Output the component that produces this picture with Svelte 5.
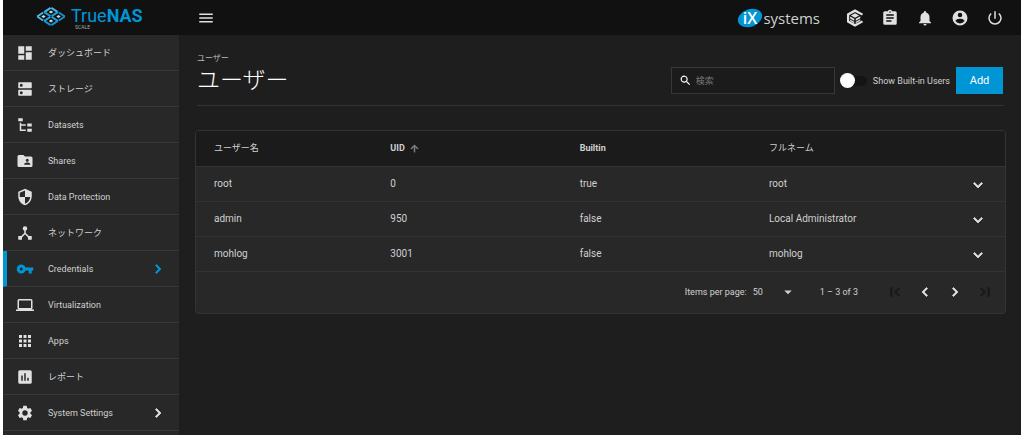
<script lang="ts">
    const menu = [
        { label: 'ダッシュボード', lang: 'ja', icon: 'M13 3v6h8V3m-8 18h8V11h-8M3 21h8v-6H3m0-2h8V3H3v10z' },
        { label: 'ストレージ', lang: 'ja', icon: 'M4 3h16a1 1 0 0 1 1 1v6a1 1 0 0 1-1 1H4a1 1 0 0 1-1-1V4a1 1 0 0 1 1-1zm3 2a2 2 0 1 0 0 4 2 2 0 0 0 0-4zM4 13h16a1 1 0 0 1 1 1v6a1 1 0 0 1-1 1H4a1 1 0 0 1-1-1v-6a1 1 0 0 1 1-1zm3 2a2 2 0 1 0 0 4 2 2 0 0 0 0-4z' },
        { label: 'Datasets', lang: 'en', icon: 'M3 3h6v4H3V3m12 7h6v4h-6v-4m0 7h6v4h-6v-4m-2-4H7v5h6v2H5V9h2v2h6v2z' },
        { label: 'Shares', lang: 'en', icon: 'M20 6h-8l-2-2H4a2 2 0 0 0-2 2v12a2 2 0 0 0 2 2h16a2 2 0 0 0 2-2V8a2 2 0 0 0-2-2zm-5 3a2 2 0 1 1 0 4 2 2 0 0 1 0-4zm4 8h-8v-1c0-1.330 2.670-2 4-2s4 .670 4 2v1z' },
        { label: 'Data Protection', lang: 'en', icon: 'M12 1 3 5v6c0 5.550 3.840 10.740 9 12 5.160-1.260 9-6.450 9-12V5l-9-4zm0 10.990h7c-.530 4.120-3.280 7.790-7 8.940V12H5V6.300l7-3.110v8.800z' },
        { label: 'ネットワーク', lang: 'ja', icon: 'm17 16-4-4V8.820C14.160 8.400 15 7.300 15 6a3 3 0 1 0-6 0c0 1.300.840 2.400 2 2.820V12l-4 4H3v5h5v-3.050l4-4.200 4 4.200V21h5v-5h-4z' },
        { label: 'Credentials', lang: 'en', active: true, arrow: true, icon: 'M12.650 10A5.990 5.990 0 0 0 7 6a6 6 0 1 0 0 12 5.990 5.990 0 0 0 5.650-4H17v4h4v-4h2v-4H12.650zM7 14a2 2 0 1 1 0-4 2 2 0 0 1 0 4z' },
        { label: 'Virtualization', lang: 'en', icon: 'M20 18a2 2 0 0 0 2-2V6a2 2 0 0 0-2-2H4a2 2 0 0 0-2 2v10a2 2 0 0 0 2 2H0v2h24v-2h-4zM4 6h16v10H4V6z' },
        { label: 'Apps', lang: 'en', icon: 'M4 8h4V4H4v4zm6 12h4v-4h-4v4zm-6 0h4v-4H4v4zm0-6h4v-4H4v4zm6 0h4v-4h-4v4zm6-10v4h4V4h-4zm-6 4h4V4h-4v4zm6 6h4v-4h-4v4zm0 6h4v-4h-4v4z' },
        { label: 'レポート', lang: 'ja', icon: 'M19 3H5a2 2 0 0 0-2 2v14a2 2 0 0 0 2 2h14a2 2 0 0 0 2-2V5a2 2 0 0 0-2-2zM9 17H7v-7h2v7zm4 0h-2V7h2v10zm4 0h-2v-4h2v4z' },
        { label: 'System Settings', lang: 'en', arrow: true, icon: 'M19.140 12.940c.040-.300.060-.610.060-.940 0-.320-.020-.640-.070-.940l2.030-1.580a.490.490 0 0 0 .120-.610l-1.920-3.320a.488.488 0 0 0-.590-.220l-2.390.960c-.500-.380-1.030-.700-1.620-.940l-.360-2.540a.484.484 0 0 0-.480-.410h-3.840c-.240 0-.430.170-.470.410l-.360 2.540c-.590.240-1.130.570-1.620.940l-2.390-.960c-.220-.080-.470 0-.590.220L2.740 8.870c-.120.210-.080.470.120.610l2.030 1.580c-.050.300-.090.630-.090.940s.020.640.070.940l-2.030 1.580a.490.490 0 0 0-.120.610l1.920 3.320c.120.220.370.290.590.220l2.390-.960c.500.380 1.030.700 1.620.940l.360 2.540c.050.240.240.410.480.410h3.840c.240 0 .440-.170.470-.410l.360-2.540c.590-.240 1.130-.560 1.620-.940l2.390.960c.220.080.470 0 .590-.220l1.920-3.320c.120-.220.070-.470-.120-.610l-2.010-1.580zM12 15.600a3.600 3.600 0 1 1 0-7.200 3.600 3.600 0 0 1 0 7.200z' },
    ];

    const actions = [
        { label: 'Tasks', icon: 'M19 3h-4.180a3 3 0 0 0-5.640 0H5a2 2 0 0 0-2 2v14a2 2 0 0 0 2 2h14a2 2 0 0 0 2-2V5a2 2 0 0 0-2-2zm-7 0a1 1 0 1 1 0 2 1 1 0 0 1 0-2zm2 14H7v-2h7v2zm3-4H7v-2h10v2zm0-4H7V7h10v2z' },
        { label: 'Alerts', icon: 'M12 22a2 2 0 0 0 2-2h-4a2 2 0 0 0 2 2zm6-6v-5c0-3.070-1.640-5.640-4.500-6.320V4a1.500 1.500 0 0 0-3 0v.680C7.630 5.360 6 7.920 6 11v5l-2 2v1h16v-1l-2-2z' },
        { label: 'Account', icon: 'M12 2a10 10 0 1 0 0 20 10 10 0 0 0 0-20zm0 3a3 3 0 1 1 0 6 3 3 0 0 1 0-6zm0 14.200a7.200 7.200 0 0 1-6-3.220c.030-1.990 4-3.080 6-3.080s5.970 1.090 6 3.080a7.200 7.200 0 0 1-6 3.220z' },
        { label: 'Power', icon: 'M13 3h-2v10h2V3zm4.830 2.170-1.420 1.420A7 7 0 1 1 7.580 6.580L6.170 5.170a9 9 0 1 0 11.660 0z' },
    ];

    const users = [
        { username: 'root', uid: 0, builtin: true, fullName: 'root' },
        { username: 'admin', uid: 950, builtin: false, fullName: 'Local Administrator' },
        { username: 'mohlog', uid: 3001, builtin: false, fullName: 'mohlog' },
    ];

    const pager = [
        { label: 'First page', disabled: true, icon: 'M18.410 16.590 13.820 12l4.590-4.590L17 6l-6 6 6 6zM6 6h2v12H6z' },
        { label: 'Previous page', disabled: false, icon: 'M15.410 7.410 14 6l-6 6 6 6 1.410-1.410L10.830 12z' },
        { label: 'Next page', disabled: false, icon: 'M10 6 8.590 7.410 13.170 12l-4.580 4.590L10 18l6-6z' },
        { label: 'Last page', disabled: true, icon: 'M5.590 7.410 10.180 12l-4.590 4.590L7 18l6-6-6-6zM16 6h2v12h-2z' },
    ];

    let search = $state('');
    let showBuiltin = $state(false);

    const visible = $derived(users.filter((u) => u.username.includes(search)));
</script>

{#snippet icon(path: string)}
    <svg class="icon" viewBox="0 0 24 24" aria-hidden="true"><path d={path} fill-rule="evenodd" /></svg>
{/snippet}

<div class="app">
    <header class="topbar">
        <a class="brand" href="#home">
            <svg class="brand-mark" viewBox="0 0 30 20" aria-hidden="true">
                <g fill="none" stroke-width="2">
                    <path stroke="#45b8e6" d="M8.200 5.600 14.600 1.300M15.400 1.300 21.800 5.600M1.200 10 7.200 6M1.200 10l6 4" />
                    <path stroke="#1492cc" d="M22.800 6l6 4M28.800 10l-6 4M8.200 14.400l6.400 4.300M15.400 18.700l6.400-4.300" />
                    <path stroke="#1c9fd8" d="M8.200 5.600 14.400 9.600M15.600 10.400l6.200 4M21.800 5.600l-6.200 4M14.400 10.400l-6.200 4" />
                </g>
                <g fill="#d5d8da">
                    <path d="m15 4 2.200 1.500L15 7l-2.200-1.500zM7.500 8.500 9.700 10l-2.200 1.500L5.300 10zM22.500 8.500l2.200 1.500-2.200 1.500-2.200-1.500zM15 13l2.200 1.500L15 16l-2.200-1.500z" />
                </g>
            </svg>
            <span class="brand-text">
                <span class="brand-name">True<b>NAS</b></span>
                <span class="brand-edition">SCALE</span>
            </span>
        </a>
        <button class="icon-button" aria-label="Toggle menu">
            {@render icon('M3 18h18v-2H3v2zm0-5h18v-2H3v2zm0-7v2h18V6H3z')}
        </button>
        <div class="actions">
            <a class="ix" href="#ix">
                <svg class="ix-badge" viewBox="0 0 26 20" aria-hidden="true">
                    <ellipse cx="13" cy="10" rx="12.500" ry="8.800" transform="rotate(-20 13 10)" fill="#0095d5" />
                    <text x="13" y="16" text-anchor="middle">iX</text>
                </svg>
                <span class="ix-name">systems</span>
            </a>
            <button class="icon-button" aria-label="TrueCommand">
                <svg class="icon" viewBox="0 0 24 24" aria-hidden="true">
                    <path d="M22 7.500 12 2.200 2.800 7.200v9.600L12 21.800l10-5.300" fill="none" stroke="currentColor" stroke-width="3" />
                    <path d="M12 5.500 17.500 8.500 12 11.500 6.500 8.500zM5.500 10l5.500 3v2.500l-5.500-3zM5.500 14l5.500 3v2l-5.500-3zM13 13l6-3.300v2.500l-6 3.300zM13 17l6-3.300v2L13 19z" />
                </svg>
            </button>
            {#each actions as action}
                <button class="icon-button" aria-label={action.label}>{@render icon(action.icon)}</button>
            {/each}
        </div>
    </header>

    <div class="body">
        <nav class="sidebar">
            {#each menu as item}
                <a class="menu-item" class:active={item.active} href="#menu">
                    {@render icon(item.icon)}
                    <span class="menu-label" lang={item.lang}>{item.label}</span>
                    {#if item.arrow}
                        <span class="chevron">{@render icon('M10 6 8.590 7.410 13.170 12l-4.580 4.590L10 18l6-6z')}</span>
                    {/if}
                </a>
            {/each}
        </nav>

        <main>
            <div class="page-header">
                <div class="titles" lang="ja">
                    <a class="breadcrumb" href="#users">ユーザー</a>
                    <h1>ユーザー</h1>
                </div>
                <div class="tools">
                    <label class="search">
                        {@render icon('M15.500 14h-.790l-.280-.270A6.500 6.500 0 1 0 13.730 14.430l.270.280v.790l5 4.990L20.490 19l-4.990-5zm-6 0a4.500 4.500 0 1 1 0-9 4.500 4.500 0 0 1 0 9z')}
                        <input type="text" lang="ja" placeholder="検索" aria-label="検索" bind:value={search} />
                    </label>
                    <label class="toggle">
                        <input type="checkbox" bind:checked={showBuiltin} />
                        <span>Show Built-in Users</span>
                    </label>
                    <button class="add">Add</button>
                </div>
            </div>

            <section class="card">
                <table>
                    <colgroup>
                        <col class="col-username" />
                        <col class="col-uid" />
                        <col class="col-builtin" />
                        <col />
                        <col class="col-expand" />
                    </colgroup>
                    <thead>
                        <tr>
                            <th lang="ja">ユーザー名</th>
                            <th>
                                <span class="sorted">UID {@render icon('m4 12 1.410 1.410L11 7.830V20h2V7.830l5.580 5.590L20 12l-8-8z')}</span>
                            </th>
                            <th>Builtin</th>
                            <th lang="ja">フルネーム</th>
                            <th></th>
                        </tr>
                    </thead>
                    <tbody>
                        {#each visible as user}
                            <tr>
                                <td>{user.username}</td>
                                <td>{user.uid}</td>
                                <td>{user.builtin}</td>
                                <td>{user.fullName}</td>
                                <td class="expand">
                                    <button class="icon-button chevron" aria-label="Expand {user.username}">
                                        {@render icon('M7.410 8.590 12 13.170l4.590-4.580L18 10l-6 6-6-6z')}
                                    </button>
                                </td>
                            </tr>
                        {/each}
                    </tbody>
                </table>
                <footer class="paginator">
                    <label class="page-size">
                        Items per page:
                        <span class="select">
                            <select>
                                <option>50</option>
                                <option>100</option>
                            </select>
                            {@render icon('m7 10 5 5 5-5z')}
                        </span>
                    </label>
                    <span class="range">1 – 3 of 3</span>
                    <div class="pages">
                        {#each pager as page}
                            <button class="icon-button chevron" aria-label={page.label} disabled={page.disabled}>
                                {@render icon(page.icon)}
                            </button>
                        {/each}
                    </div>
                </footer>
            </section>
        </main>
    </div>
</div>

<style>
    :global(body) {
        background: #fff;
    }

    .app {
        display: flex;
        flex-direction: column;
        height: 100vh;
        overflow: hidden;
        margin: 0 3px;
        background: #1e1e1e;
        color: #d0d0d0;
        font: 10px/16px Roboto, 'Noto Sans CJK JP', sans-serif;
    }

    a {
        color: inherit;
        text-decoration: none;
    }

    button,
    input,
    select {
        padding: 0;
        border: none;
        background: none;
        color: inherit;
        font: inherit;
    }

    .icon {
        display: block;
        flex: none;
        width: 18px;
        height: 18px;
        fill: currentColor;
    }

    .icon-button {
        display: flex;
        color: #e0e0e0;
    }

    .chevron {
        stroke: currentColor;
    }

    .topbar {
        display: flex;
        align-items: center;
        flex: none;
        height: 35px;
        background: #111;
    }

    .brand {
        display: flex;
        gap: 5px;
        width: 161px;
        padding-left: 33px;
        color: #0095d5;
    }

    .brand-mark {
        width: 30px;
        height: 21px;
    }

    .brand-text {
        display: flex;
        flex-direction: column;
        padding-top: 1px;
    }

    .brand-name {
        font-size: 18px;
        line-height: 18px;
    }

    .brand-edition {
        padding-left: 4px;
        color: #aaa;
        font-size: 5px;
        line-height: 5px;
    }

    .actions {
        display: flex;
        align-items: center;
        gap: 17px;
        margin-left: auto;
        padding-right: 17px;
    }

    .ix {
        display: flex;
        align-items: center;
        margin-right: 9px;
        font-family: 'Open Sans', sans-serif;
    }

    .ix-badge {
        width: 26px;
        height: 20px;
        overflow: visible;
        fill: #fff;
        font-size: 16px;
        font-weight: 600;
    }

    .ix-name {
        font-size: 15px;
        line-height: 20px;
    }

    .body {
        display: flex;
        flex: 1;
        min-height: 0;
    }

    .sidebar {
        flex: none;
        width: 176px;
        background: #282828;
    }

    .menu-item {
        display: flex;
        align-items: center;
        height: 35px;
        padding: 0 12px 0 13px;
        border-bottom: 1px solid #383838;
        font-size: 9px;
    }

    .menu-item .icon {
        color: #e0e0e0;
    }

    .menu-item.active {
        padding-left: 9px;
        border-left: 4px solid #0095d5;
    }

    .menu-item.active .icon {
        color: #0095d5;
    }

    .menu-label {
        flex: 1;
        padding-left: 14px;
    }

    main {
        flex: 1;
        min-width: 0;
        padding: 16px 15px 0 16px;
    }

    .page-header {
        display: flex;
        justify-content: space-between;
        margin: 0 2px 24px;
        padding-bottom: 11px;
        border-bottom: 1px solid #333;
    }

    .breadcrumb {
        display: block;
        color: #bbb;
        font-size: 8px;
    }

    h1 {
        margin: 0;
        color: #fff;
        font-size: 23px;
        font-weight: 300;
        line-height: 27px;
    }

    .tools {
        display: flex;
        align-items: center;
        align-self: flex-end;
        padding-right: 1px;
    }

    .search {
        display: flex;
        align-items: center;
        gap: 4px;
        box-sizing: border-box;
        width: 164px;
        height: 27px;
        padding: 0 7px;
        border: 1px solid #383838;
        background: #1b1b1b;
    }

    .search .icon {
        width: 13px;
        height: 13px;
        color: #fff;
    }

    .search input {
        flex: 1;
        min-width: 0;
        outline: none;
        font-size: 9px;
    }

    .search input::placeholder {
        color: #777;
    }

    .toggle {
        display: flex;
        align-items: center;
        gap: 6px;
        margin: 0 6px 0 5px;
        font-size: 9px;
    }

    .toggle input {
        position: relative;
        width: 27px;
        height: 15px;
        margin: 0;
        appearance: none;
    }

    .toggle input::before {
        content: '';
        position: absolute;
        inset: 3px 0 2px 3px;
        border-radius: 5px;
        background: #141414;
    }

    .toggle input::after {
        content: '';
        position: absolute;
        top: 0;
        left: 0;
        width: 15px;
        height: 15px;
        border-radius: 50%;
        background: #fff;
    }

    .toggle input:checked::after {
        left: 12px;
        background: #0095d5;
    }

    .add {
        width: 47px;
        height: 27px;
        background: #0095d5;
        color: #fff;
        font-size: 11px;
    }

    .card {
        overflow: hidden;
        border: 1px solid #333;
        border-radius: 4px;
        background: #282828;
    }

    table {
        width: 100%;
        border-collapse: collapse;
        table-layout: fixed;
    }

    .col-username {
        width: 21.8%;
    }

    .col-uid,
    .col-builtin {
        width: 23.4%;
    }

    .col-expand {
        width: 44px;
    }

    th,
    td {
        box-sizing: border-box;
        height: 35px;
        padding: 0 0 0 18px;
        border-bottom: 1px solid #333;
        text-align: left;
    }

    th {
        background: #1b1b1b;
        font-size: 9px;
        font-weight: 700;
    }

    th:lang(ja) {
        font-weight: 400;
    }

    td {
        font-size: 10px;
    }

    .expand {
        padding: 2px 0 0 8px;
    }

    .sorted {
        display: flex;
        align-items: center;
        gap: 4px;
    }

    .sorted .icon {
        width: 11px;
        height: 11px;
        color: #888;
        stroke: currentColor;
    }

    .paginator {
        display: flex;
        align-items: center;
        justify-content: flex-end;
        height: 41px;
        padding-right: 11px;
        font-size: 9px;
    }

    .page-size,
    .select {
        display: flex;
        align-items: center;
    }

    .page-size {
        gap: 6px;
    }

    .select select {
        width: 26px;
        appearance: none;
    }

    .range {
        margin: 0 28px 0 23px;
    }

    .pages {
        display: flex;
        gap: 12px;
    }

    .pages .icon-button:disabled {
        color: #191919;
    }
</style>
